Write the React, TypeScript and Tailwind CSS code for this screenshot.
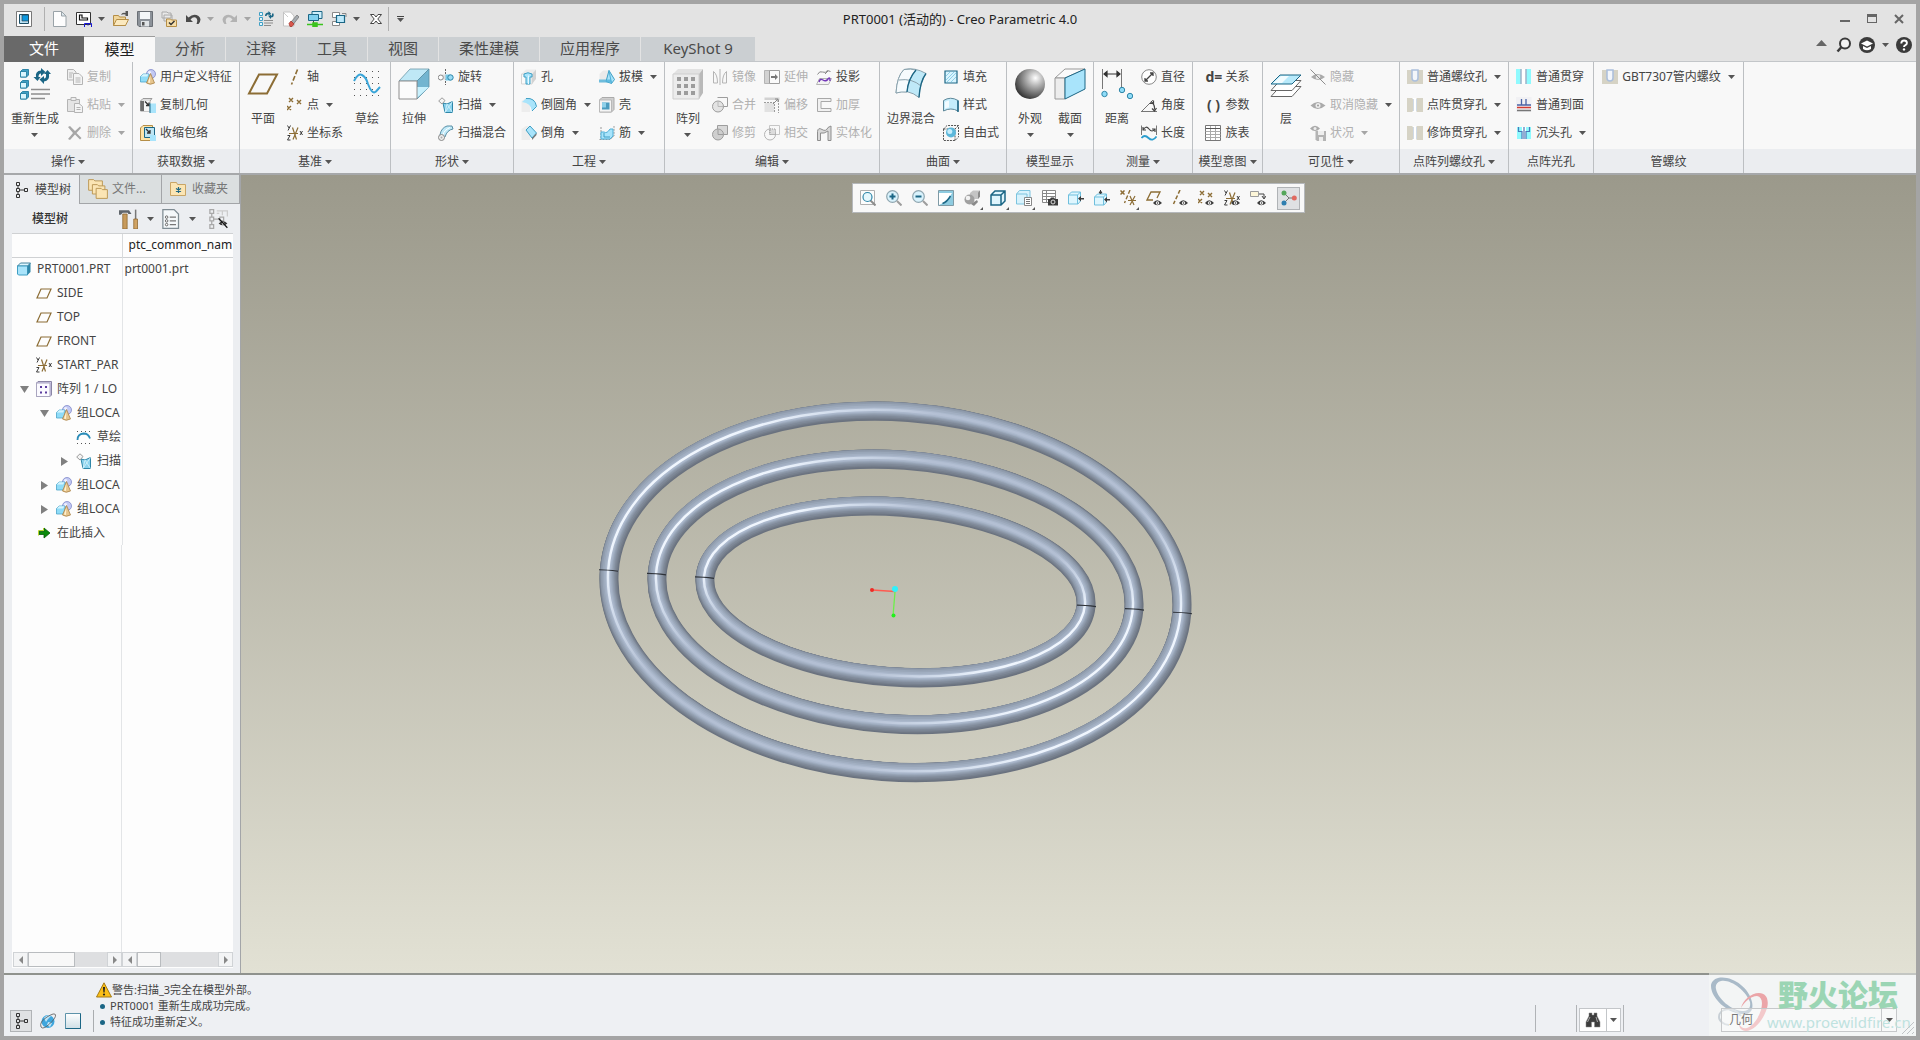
import type { ReactNode } from "react";

const BLUE = "#1b6685";
const SKY = "#a9e4fb";
const MID = "#4fb0d8";
const BROWN = "#8c6d35";
const DIM = "#b4b4b4";

const solids = (
  <>
    <circle cx="11" cy="5" r="4.5" fill="#c3c9f3" stroke="#8089c9" strokeWidth=".8" />
    <circle cx="9.6" cy="3.6" r="1.6" fill="#eef0ff" />
    <path d="M.5 7.5 3 5h6v6l-2 2H.5z" fill="#8fdcf8" stroke="#4ba5c9" strokeWidth=".8" />
    <path d="M.8 7.5 3 5.3h5.5L7 7.5z" fill="#d6f4fe" />
    <path d="M10.5 4.5 6.5 14q3.5 2.5 8 0z" fill="#e6c58d" stroke="#a98246" strokeWidth=".8" />
    <path d="M10.3 6.5 8 13.5l2 .6z" fill="#fff0cf" />
  </>
);

const eye = (
  <>
    <path d="M7 13q4-5.5 9 0-5 4.5-9 0z" fill="#3c3c3c" />
    <circle cx="11.5" cy="13" r="1.7" fill="#fff" />
    <circle cx="11.5" cy="13" r=".8" fill="#333" />
  </>
);

const csys = (c: string) => (
  <>
    <path d="M2 8.500h9M5.500 2.500l4 12M11 2.500l-5 12" stroke={c} strokeWidth="1.200" fill="none" />
    <path d="m.5.5 1.500 2.500M3.500.5 1 5.500M.5 10.500h2.500l-2.500 4.500h3M13 6l2.500 4M15.500 6 13 10" stroke="#3c3c3c" fill="none" />
  </>
);

const crosses = (c: string) => (
  <path d="m2 1 4 4m0-4L2 5m8-2 4 4m0-4-4 4M0 9l4 4m0-4-4 4" stroke={c} strokeWidth="1.4" fill="none" />
);

const sweep = (
  <>
    <path d="m5 6 4 1 5.500-2.500v11H7z" fill="#8bd3ee" stroke="#2f86a8" />
    <path d="m9 7 5.500 8.500M14.500 4.500 7 15.500M9 7l-2 8.500" stroke="#d9f4fd" strokeWidth=".8" fill="none" />
    <path d="M.7 4 4 .8l3 2.700L4 7z" fill="#f5f5f5" stroke="#9b9b9b" />
  </>
);

const treeIcon = (c: string) => (
  <path
    d="M1.500.5h3v3h-3zM1.500 6.500h3v3h-3zM1.500 12.500h3v3h-3zM9.500 6.500h3v3h-3zM3 4v2M3 10v2M5 8h4"
    stroke={c}
    fill="none"
  />
);

const greyHoles = (
  <>
    <path d="M0 1h16v14H0z" fill="#fff" />
    <path d="M0 1h5l1 1v12l-1 1H0zM10 1h6v14h-6l-1-1V2z" fill="#d6d3c5" />
    <path d="M6.500 2v12M9.500 2v12" stroke="#d0dae6" />
  </>
);

const greyU = (
  <>
    <path d="M0 1h16v14H0z" fill="#d6d3c5" />
    <path d="M5 1v8q0 3 3 3t3-3V1z" fill="#f3f6fa" stroke="#abbfdc" strokeWidth="1.500" />
  </>
);

const blockBase = (
  <>
    <path d="M.5 5 5 .5h10L11 5v10H.5z" fill="#ececec" />
    <path d="M.5 5H11v10H.5z" fill="#fafafa" stroke="#d5d5d5" />
    <path d="m11 5 4-4.500V10L11 15z" fill="#d2d2d2" />
  </>
);

const regen = (
  <>
    <g fill="#e5f7fe" stroke="#3f9fc4">
      <path d="M.5 1.500h3v3h-3zM.5 6.500h3v3h-3zM.5 11.500h3v3h-3z" />
    </g>
    <path d="M5 9.500h9M5 12h9M5 14.500h7" stroke="#8b8b8b" />
    <path d="M6 5q0-3.500 3.500-3.500V0L12 2.500 9.500 5V3.200Q7.500 3.200 7.500 5zM14.500 2.500q1 4-2.500 4V8L9.500 5.500 12 3.200v1.600q1.500 0 1-2.300z" fill={BLUE} />
  </>
);

const icons: Record<string, ReactNode> = {
  app: (
    <>
      <path d="M.5.500h15v15H.5z" fill="#fff" stroke="#777" />
      <path d="M3.500 3.500h9v9h-9z" fill="#b9e2f6" stroke="#1d4e66" />
      <path d="M6 4h6.500v6H6z" fill="#0e98df" stroke="#333" strokeWidth=".6" />
    </>
  ),
  fresh: (
    <>
      <path d="M1.500.5h8L14 5v10.500H1.500z" fill="#fdfdfd" stroke="#9aa3a8" />
      <path d="M9.500.5V5H14z" fill="#dde8ed" stroke="#9aa3a8" />
    </>
  ),
  outline: (
    <>
      <path d="M.5 1.500h14v12H.5z" fill="#fff" stroke="#333" />
      <path d="M3.500 4v5h8V7H6V4z" stroke="#111" fill="none" strokeWidth="1.200" />
      <path d="M8.500 16v-3.500h7V16M12 12.500v2" stroke="#1717d8" fill="none" />
    </>
  ),
  open: (
    <>
      <path d="M.5 14.500V4.500h5l1 1.500h6v8.500z" fill="#f1d69b" stroke="#b58e47" />
      <path d="m.5 14.500 3-6h12l-3 6z" fill="#fbe9bf" stroke="#b58e47" />
      <path d="M8 4q1-3 4.500-2V0H15v5h-2.500V3.500Q10 3 8 4z" fill="#555" />
    </>
  ),
  save: (
    <>
      <path d="M.5.500h15v15H2L.5 14z" fill="#8c9299" stroke="#6a6f75" />
      <path d="M3 1h10v7H3z" fill="#f4f7f9" />
      <path d="M4 10h8v5.500H4z" fill="#dfe3e6" />
      <path d="M5 11h2.500v3.500H5z" fill="#555" />
    </>
  ),
  checkin: (
    <>
      <path d="M1 1h5l1 1h3v5H1zM3 4h8v6H3z" fill="#e9e9e9" stroke="#aaa" />
      <path d="M5.500 15.500V8h4l1 1h5v6.500z" fill="#f6deaa" stroke="#b58e47" />
      <path d="m8 11.500 2 2 3.500-3.500" stroke="#333" strokeWidth="1.500" fill="none" />
    </>
  ),
  undo: <path d="M1 4v7h7L5.500 8.500Q8 5.500 10.500 6.500q3 1.500 1 6.500h2q4-5 0-8Q8.500 2 3.500 6.500z" fill="#4a4a4a" />,
  redo: <path d="M15 4v7H8l2.500-2.500Q8 5.500 5.500 6.500q-3 1.500-1 6.500h-2q-4-5 0-8Q7.500 2 12.500 6.500z" fill="#b3b3b3" />,
  regen,
  erase: (
    <>
      <path d="M.5 1h7L11 5v10H.5z" fill="#fff" stroke="#c4c4c4" />
      <path d="m8 11 6-7 2 2-5.500 7z" fill="#a5abb0" stroke="#6f6f6f" strokeWidth=".7" />
      <path d="M6 12.500 8 10l3 3-2 2.500H7z" fill="#d8574d" stroke="#9d2f27" strokeWidth=".7" />
      <path d="m1 2 4 4" stroke="#ccc" />
    </>
  ),
  network: (
    <>
      <path d="M5 .5h10v7H5z" fill="#cdeefb" stroke={BLUE} />
      <path d="M1.500 3.500h10v6h-10z" fill="#7fd0ef" stroke={BLUE} />
      <path d="M6.500 10v2" stroke="#444" />
      <path d="M0 13.500h16M6 12h4v3.500H6z" stroke="#3bc31e" strokeWidth="1.500" fill="#3bc31e" />
    </>
  ),
  windows: (
    <>
      <path d="M1.500 1.500h7v5h-7zM1.500 10.500h7v4h-7z" fill="#fff" stroke="#888" />
      <path d="M11 2.500h4V6" fill="none" stroke="#888" />
      <path d="M5.500 4.500h8v7h-8z" fill="#bce9fb" stroke={BLUE} strokeWidth="1.200" />
    </>
  ),
  closeWin: <path d="M2.500 3.500h3.500L8 6l2-2.500h3.500L9.800 8l3.700 4.500H10L8 10l-2 2.500H2.500L6.200 8z" fill="#fff" stroke="#444" />,
  copy: (
    <>
      <path d="M.5.500h6L9 3v8H.5z" fill="#efefef" stroke={DIM} />
      <path d="M6.500 4.500H12L15.500 8v7.500h-9z" fill="#f4f4f4" stroke={DIM} />
      <path d="M2 4h4M2 6h3M2 8h3M8.500 9h5M8.500 11h5M8.500 13h5" stroke={DIM} />
    </>
  ),
  paste: (
    <>
      <path d="M.5 2.500h12v12H.5z" fill="#e4e4e4" stroke={DIM} />
      <path d="M4 .5h5v3H4z" fill="#eee" stroke={DIM} />
      <path d="M7.500 6.500H12l3.500 3v6h-8z" fill="#f4f4f4" stroke={DIM} />
      <path d="M9.500 10.500h4M9.500 12.500h4" stroke={DIM} />
    </>
  ),
  remove: <path d="M1 2 3 1l5 5 5-4.500L14 3l-4.500 5 5 5-1.500 1.500L8 9.500 3 15l-2-1 5-6z" fill="#a7a7a7" />,
  solids,
  copyGeom: (
    <>
      <path d="M.5 4 3 1.500h9L10 4v10H.5z" fill="#dedede" stroke="#9a9a9a" />
      <path d="M.5 4H4v10H.5z" fill="#6d6d6d" />
      <path d="M4 4h5.500v10H4z" fill="#f6f6f6" />
      <path d="m5 4.500 4 4m0-3v3H6" stroke="#333" strokeWidth="1.300" fill="none" />
      <path d="M10 6.500h6V16h-6z" fill={SKY} />
      <path d="M10 6.500V16" stroke={BLUE} />
    </>
  ),
  shrink: (
    <>
      <path d="M.5 3 3 .5h9.500v13L11 15.500H.5z" fill="#ffe3a7" stroke="#b58e47" />
      <path d="M4.500 2.500h10v10h-10z" fill="#bfe5f3" stroke={BLUE} />
      <path d="m6 4 4 4m0-3v3H7" stroke="#333" strokeWidth="1.300" fill="none" />
      <path d="M10 10h6v6h-6z" fill={SKY} />
    </>
  ),
  axis: <path d="M10.500.5 4.500 15.500" stroke={BROWN} strokeWidth="1.600" strokeDasharray="5 2" />,
  points: crosses(BROWN),
  csys: csys(BROWN),
  revolve: (
    <>
      <path d="M7.500 0v16" stroke="#666" strokeDasharray="2 1" />
      <path d="M4 5.500h4v5H4z" fill="#ddd" />
      <path d="M7.500 5.500h5v6h-5z" fill="#75c9e8" />
      <circle cx="2.800" cy="8.500" r="2.500" fill="#fff" stroke="#888" />
      <circle cx="12.500" cy="8.500" r="2.700" fill="#9adcf5" stroke="#2f86a8" />
    </>
  ),
  sweep,
  blend: (
    <>
      <path d="M2 10Q3 3 9 1h5l1 3q-6 1-8 8l-3 2z" fill="#bfe9f8" stroke="#5a8fa5" />
      <path d="M5 10Q6 5 12 2.500" stroke="#fff" fill="none" />
      <circle cx="3.500" cy="12.500" r="3" fill="#eee" stroke="#888" />
      <circle cx="3.500" cy="12.500" r="1" fill="#aaa" />
    </>
  ),
  hole: (
    <>
      {blockBase}
      <path d="M3 5q4-2.500 8 0v3H9v7H5V8H3z" fill={SKY} stroke="#3f9fc4" />
      <path d="M7.500 6.500V15" stroke="#e8f9ff" />
    </>
  ),
  round: (
    <>
      <path d="M.5 4 5 1h5L9 4v11H.5z" fill="#ededed" />
      <path d="M5 1.500q9-1 10.500 8L11 14Q10 6 1 5z" fill={SKY} />
      <path d="M5 1.500q9-1 10.500 8L11 14" fill="none" stroke="#3f9fc4" />
    </>
  ),
  chamfer: (
    <>
      <path d="M.5 4 5 1h5L9 4v11H.5z" fill="#ededed" />
      <path d="m5 5 4-4 6.500 7-4.500 5z" fill={SKY} stroke="#3f9fc4" />
      <path d="m11 13 4.500-5v2L11 15z" fill="#777" />
    </>
  ),
  draft: (
    <>
      <path d="M.5 5 4 1.500h6v12H.5z" fill="#eaeaea" />
      <path d="m7 12.500 3-11 5.500 9-3 4z" fill={SKY} stroke="#3f9fc4" />
      <path d="m10 1.500 2.500 13" fill="none" stroke={MID} />
      <path d="M0 10.500h12l1 3H0z" fill={MID} opacity=".8" />
    </>
  ),
  shell: (
    <>
      <path d="M.5 3 3 .5h12v12L12.500 15H.5z" fill="#cfcfcf" stroke="#aaa" />
      <path d="M.5 3h12v12H.5z" fill="#f4f4f4" stroke="#b9b9b9" />
      <path d="M3 5.500h7.500v7H3z" fill="#4b9cbf" />
      <path d="M3 5.500h4v5H3z" fill="#8fd1ea" />
    </>
  ),
  rib: (
    <>
      <path d="M2 2v12M.5 14.500H11L15 11V1" stroke="#999" strokeDasharray="2 1" fill="none" />
      <path d="M2 7h3q3 2 6-3h3v7l-3 3H2z" fill={SKY} stroke={MID} />
      <path d="M5 8v4h6" stroke="#3f9fc4" fill="none" />
    </>
  ),
  mirror: <path d="M8 0v16M1.500 2.500q4 3 4 11.500h-4zM14.500 2.500q-4 3-4 11.500h4z" stroke={DIM} fill="none" />,
  merge: (
    <>
      <path d="M5.500.5h10v9h-6" fill="none" stroke="#9d9d9d" />
      <circle cx="6" cy="9.500" r="5.500" fill="#e3e3e3" stroke="#9d9d9d" />
      <path d="M6 4.500v5h5" fill="none" stroke="#b9b9b9" />
    </>
  ),
  trim: (
    <>
      <path d="M5.500.5h10v9h-10z" fill="#d8d8d8" stroke="#9d9d9d" />
      <circle cx="6" cy="9.500" r="5.500" fill="#cfcfcf" stroke="#9d9d9d" />
      <path d="M6 4.500v5h5" fill="none" stroke="#9d9d9d" />
    </>
  ),
  extend: (
    <>
      <path d="M.5 1.500h5v13h-5z" fill="#d2d2d2" stroke={DIM} />
      <path d="M5.500 1.500h10v13h-10z" fill="#fafafa" stroke="#9d9d9d" />
      <path d="M7 7h4V5l3 3-3 3V9H7z" fill="#777" />
    </>
  ),
  offset: (
    <>
      <path d="M.5.500h15V3H.5z" fill="#d2d2d2" />
      <path d="M.5 6H10v9H.5z" fill="#e2e2e2" />
      <path d="M0 5.500h10.500V16M14.500 3v13" stroke="#9d9d9d" strokeDasharray="2 1" fill="none" />
      <path d="m9 7 5-5m-3 0h3v3" stroke="#888" fill="none" />
    </>
  ),
  intersect: (
    <>
      <path d="M5.500.5h10v9h-10z" fill="none" stroke="#c6c6c6" />
      <circle cx="6" cy="9.500" r="5.500" fill="none" stroke={DIM} />
      <path d="M6 4h5.500v5.500H6z" fill="#dcdcdc" stroke="#999" strokeDasharray="1 1" />
    </>
  ),
  project: (
    <>
      <path d="M1.500 5.500q2-4 5-2.500t5-1.500l3 1M9 5l3-3" stroke="#888" fill="none" />
      <path d="m.5 15.500 3-6h12l-3 6z" fill="#f3f3f3" stroke={DIM} />
      <path d="M3 13q1-4 4-2t5-1 2 2" stroke="#7337b8" strokeWidth="1.400" fill="none" />
    </>
  ),
  thicken: <path d="M15 1.500H1.500v13H15v-3H5v-7h10z" fill="#f1f1f1" stroke="#a8a8a8" />,
  solidify: (
    <path d="M1.500 15.500v-9Q2 2 6 4.500t6-2l3-1.500V15.500h-3V6Q8 9 4.500 8v7.500z" fill="#d8d8d8" stroke="#8e8e8e" />
  ),
  fill: (
    <>
      <path d="M2 2h12v12H2z" fill="#d9f4fe" stroke={BLUE} strokeWidth="1.200" />
      <path d="m3 7 4-4M3 11l8-8M4 13l9-9M8 13l5-5" stroke="#8fd0e8" />
    </>
  ),
  style: (
    <>
      <path d="M.5 3.500q7-4.500 14.500 0V14q-7-4-14.500 0z" fill="#c4ecfb" stroke="#5d8799" />
      <path d="M2 5q2-1.500 4-1.500v7q-2 0-4 1.200z" fill="#f1fbff" />
      <path d="M15 3.500V15" stroke={BLUE} strokeWidth="1.500" />
    </>
  ),
  freestyle: (
    <>
      <path d="M.5 4 4 .5h11.500V12L12 15.500H.500zM.5 4H12v11.500M12 4 15.500.5" stroke="#555" fill="none" strokeDasharray="2 1" />
      <circle cx="8" cy="7.500" r="5" fill="#5cb7da" />
      <circle cx="6.800" cy="6.500" r="2.500" fill="#c6edfb" />
    </>
  ),
  diameter: (
    <>
      <circle cx="8" cy="8" r="7.300" fill="#fff" stroke="#888" />
      <path d="m4 12 8-8M4 9v3h3M12 7V4H9" stroke="#444" strokeWidth="1.300" fill="none" />
    </>
  ),
  angle: (
    <>
      <path d="M0 14.500h16M1 14 12 3" stroke="#777" fill="none" />
      <path d="M10 4.500q4 3 3.500 8M8.500 6.500h4v-3M11 11.500l2.500 2.500 2-3" stroke="#444" strokeWidth="1.200" fill="none" />
    </>
  ),
  length: (
    <>
      <path d="M.5.500V10M15.500.5V10" stroke="#777" />
      <path d="M2 5q3-5 6-1t6 0M2 2v3h3M14 7V4h-3" stroke="#444" strokeWidth="1.200" fill="none" />
      <path d="M.5 13q3-4 7 0t8-1.500" stroke="#2b9dce" strokeWidth="1.800" fill="none" />
    </>
  ),
  table: (
    <>
      <path d="M.5.500h15v15H.5z" fill="#fff" stroke="#777" />
      <path d="M.5 3.500h15M.5 6.500h15M.5 9.500h15M.5 12.500h15M5.500 1v14M10.500 1v14" stroke="#aaa" fill="none" />
      <path d="M.5 3.500h15" stroke="#555" />
    </>
  ),
  hide: (
    <>
      <path d="M1 8q6.500-6 14 0-7 6-14 0z" fill="#aaa" />
      <circle cx="8" cy="8" r="2.300" fill="#e8e8e8" />
      <path d="m.5.500 15 15" stroke="#8e8e8e" />
    </>
  ),
  unhide: (
    <>
      <path d="M.500 8.500q7-7 15 0-8 7-15 0z" fill="#aaa" />
      <circle cx="8" cy="8.500" r="2.500" fill="#eee" />
      <circle cx="8" cy="8.500" r="1" fill="#999" />
    </>
  ),
  status: (
    <>
      <path d="M0 3.500q5-5.500 10 0-5 5-10 0z" fill="#aaa" />
      <circle cx="5" cy="3.500" r="1.500" fill="#eee" />
      <path d="M5.500 6H16v10H7l-1.500-1.500z" fill="#b4b4b4" />
      <path d="M8 6h6v4H8zM9 12h4v4H9z" fill="#eee" />
    </>
  ),
  greyU,
  greyHoles,
  cyanHoles: (
    <>
      <path d="M0 0h15v15H0z" fill="#8ffafe" />
      <path d="M5 0h5v15H5z" fill="#fff" />
      <path d="M5 0v15M10 0v15" stroke="#9fb3c8" strokeWidth="1.500" />
    </>
  ),
  toFace: (
    <>
      <path d="M0 0h15.500v15H0z" fill="#f1f1f4" />
      <path d="M1 8h14M5.500 2v6M10 2v6" stroke="#4a63a5" strokeWidth="1.300" />
      <path d="M1 10.500h14" stroke="#d33b31" strokeWidth="1.500" />
      <path d="M1 13.500h14" stroke="#777" strokeWidth="1.500" />
    </>
  ),
  sink: (
    <>
      <path d="M1 2h14v12H1z" fill="#8ffafe" />
      <path d="M6 2h4v12H6z" fill="#fff" />
      <path d="M2.500 2v4.500H6V14M13.500 2v4.500H10V14M8 2v12" stroke="#4a78b8" strokeWidth="1.200" fill="none" />
    </>
  ),
  tree: treeIcon("#333"),
  folders: (
    <g fill="#fbe5b4" stroke="#bd9a58" strokeWidth=".8">
      <path d="M.5 9V.5h4l1 1h6V9z" />
      <path d="M3.500 12V4.500h4l1 1h5V12z" />
      <path d="M6.500 15.500v-8h4l1 1h4v7z" />
    </g>
  ),
  favourite: (
    <>
      <path d="M.5 14.500v-13h6l1 2h8v11z" fill="#fbe5b4" stroke="#c9a566" />
      <path d="M8.500 6v6M6 7.500l5 3M6 10.500l5-3" stroke={BLUE} strokeWidth="1.200" />
    </>
  ),
  filterTree: (
    <>
      {treeIcon("#a8a8a8")}
      <path d="M7 1.500h9M7 3.500h2M11.500 2v3M15.500 2v4" stroke="#ccc" fill="none" />
      <path d="M8.500 11.500q3.500-3.500 7 0-3.500 3-7 0z" fill="#333" />
      <circle cx="12" cy="11.500" r="1" fill="#fff" />
      <path d="m8.500 7.500 7 7.500" stroke="#111" />
    </>
  ),
  tools: (
    <>
      <path d="M0 1h8l2 3H7.500L7 3H3L1.500 4.500H0z" fill="#5f656b" />
      <path d="M3 4h3.500v12H3z" fill="#c79a5b" stroke="#8b642e" strokeWidth=".6" />
      <path d="M12.700.5h1.200V8h-1.200z" fill="#777" />
      <path d="M11.800 8h3v8h-3z" fill="#d0a364" stroke="#8b642e" strokeWidth=".6" />
    </>
  ),
  settings: (
    <>
      <path d="M1.500.5h9L14 4v11.500H1.500z" fill="#f4f8fa" stroke="#7f8c93" />
      <path d="M7 6.500h5M7 9.500h5M7 12.500h5" stroke="#777" />
      <g fill="#fff" stroke="#666" strokeWidth=".8">
        <circle cx="4.500" cy="6.500" r="1" />
        <circle cx="4.500" cy="9.500" r="1" />
        <circle cx="4.500" cy="12.500" r="1" />
      </g>
    </>
  ),
  part: (
    <>
      <path d="m1.500 5 3-3h10l-3 3z" fill="#dff6fe" stroke={BLUE} strokeWidth=".8" />
      <path d="M1.500 5h10v9h-9l-1-1z" fill={SKY} stroke="#3f9fc4" />
      <path d="m11.500 5 3-3v9l-3 3z" fill="#2f86a8" />
    </>
  ),
  plane: <path d="M5 4h10l-4 9H1z" fill="none" stroke={BROWN} strokeWidth="1.200" />,
  pattern: (
    <>
      <path d="M.5 2 2 .5h13.500V14L14 15.500H.5z" fill="#cfc9ea" stroke="#8b86a5" />
      <path d="M.5 2H14v13.500H.5z" fill="#fbfaff" stroke="#a9a5bf" />
      <path d="M4 5h2v2H4zM9 5h2v2H9zM4 10.500h2v2H4zM9 10.500h2v2H9z" fill="#5b3d9e" />
    </>
  ),
  sketchSmall: (
    <>
      <path d="M1 2.500h15M1 14.500h15" stroke="#555" strokeDasharray="1 3" />
      <path d="M1.500 11q0-6 6-6.500 5 0 6.500 5" fill="none" stroke="#2b8cb8" strokeWidth="1.800" />
    </>
  ),
  insert: (
    <>
      <path d="M3 6.500h5V3l6 5-6 5V9.500H3z" fill="#0a8a0a" stroke="#0a5a0a" strokeWidth=".8" />
      <path d="M2.500 10.500v-5h5V3" stroke="#b9d531" fill="none" />
    </>
  ),
  refit: (
    <>
      <path d="M.5.5h14v14H.5z" fill="#fdfdfd" stroke="#b0b0b0" />
      <path d="m10 10 5.500 5.500" stroke="#8d8d8d" strokeWidth="2" />
      <circle cx="7.500" cy="7" r="4.500" fill="#e6f7fd" stroke="#2f86a8" strokeWidth="1.200" />
    </>
  ),
  zoomIn: (
    <>
      <circle cx="6.500" cy="6.500" r="5.800" fill="#d9f2fc" stroke="#8fa6b0" strokeWidth="1.200" />
      <path d="M3.500 6.500h6M6.500 3.500v6" stroke={BLUE} strokeWidth="2" />
      <path d="m11 11 4.500 4.500" stroke="#9d9d9d" strokeWidth="2" />
    </>
  ),
  zoomOut: (
    <>
      <circle cx="6.500" cy="6.500" r="5.800" fill="#d9f2fc" stroke="#8fa6b0" strokeWidth="1.200" />
      <path d="M3.500 6.500h6" stroke={BLUE} strokeWidth="2" />
      <path d="m11 11 4.500 4.500" stroke="#9d9d9d" strokeWidth="2" />
    </>
  ),
  repaint: (
    <>
      <path d="M.5.500h15v15H.5z" fill="#8ecbe0" stroke="#7f9aa5" />
      <path d="M1 3h13q-4 7-9 10l-4 2z" fill="#fff" />
      <path d="M4.500 13.500Q9 12 12.500 6" stroke={BLUE} strokeWidth="1.500" fill="none" />
    </>
  ),
  shading: (
    <>
      <path d="M6 3 9 .5h7v6L14 9H6z" fill="#c4c4c4" />
      <path d="m14 2.500 2-2v6L14 9z" fill="#8a8a8a" />
      <circle cx="5.500" cy="9.500" r="5" fill="#a0a0a0" />
      <circle cx="4" cy="8" r="2.300" fill="#f2f2f2" />
      <path d="m7 14 6-4 1 2-4 4z" fill="#8a8a8a" />
    </>
  ),
  cube: <path d="M1 5 5 1h10v10l-4 4H1zM1 5h10v10M11 5l4-4" fill="#dff5fd" stroke={BLUE} strokeWidth="1.500" />,
  savedView: (
    <>
      <path d="m.5 4 3-3.500h10.500V12l-2 2H.5z" fill="#d8f2fc" stroke="#7cc4df" />
      <path d="M.5 4H11v4" fill="none" stroke="#7cc4df" />
      <path d="M8.500 7.500h7v8h-7z" fill="#fff" stroke="#888" />
      <path d="M10 9.500h4M10 11.500h4M10 13.500h4" stroke="#777" />
    </>
  ),
  viewManager: (
    <>
      <path d="M.5.500h13v12H.5z" fill="#fff" stroke="#888" />
      <path d="M.5 3.500h13M.5 6.500h13M.5 9.500h13M4.500.5v12" stroke="#888" />
      <path d="M6 9h2l1-1.500h3L13 9h3v6.500H6z" fill="#3b3b3b" />
      <circle cx="11" cy="12" r="2" fill="#3b3b3b" stroke="#ddd" />
    </>
  ),
  explode: (
    <>
      <path d="m.5 5 3-3h9v9l-2.500 3H.5z" fill="#dff6fe" stroke="#6fbfdd" />
      <path d="M.500 5h9v9M9.500 5l3-3" fill="none" stroke="#6fbfdd" />
      <path d="M10 8.500 13 6v2h3v1.500h-3v2z" fill="#3c3c3c" />
    </>
  ),
  explodeUp: (
    <>
      <path d="m.5 7 3-3h9v8l-2.500 3H.5z" fill="#dff6fe" stroke="#6fbfdd" />
      <path d="M.500 7h9v8M9.500 7l3-3" fill="none" stroke="#6fbfdd" />
      <path d="M6.500 0v3M5 2l1.500 2L8 2z" stroke="#3c3c3c" fill="#3c3c3c" />
      <path d="M10 9.500 13 7v2h3v1.500h-3v2z" fill="#3c3c3c" />
    </>
  ),
  datumFilter: (
    <>
      <path d="m.5.500 4 4m0-4-4 4" stroke={BROWN} strokeWidth="1.500" />
      <path d="M10 0 4.500 13" stroke={BROWN} strokeWidth="1.400" strokeDasharray="4 2" />
      <path d="M8 10.500h8M10 6l4 9M15 6l-5 9" stroke={BROWN} strokeWidth="1.200" />
    </>
  ),
  planeEye: (
    <>
      <path d="M7 10H1l4-8h9l-3 6" fill="none" stroke={BROWN} strokeWidth="1.300" />
      {eye}
    </>
  ),
  axisEye: (
    <>
      <path d="M8 0 1.500 14" stroke={BROWN} strokeWidth="1.500" strokeDasharray="4 2" />
      {eye}
    </>
  ),
  pointEye: (
    <>
      {crosses(BROWN)}
      {eye}
    </>
  ),
  csysEye: (
    <>
      {csys(BROWN)}
      {eye}
    </>
  ),
  noteEye: (
    <>
      <path d="M.5 1.500h8v5h-8z" fill="#fdf6d8" stroke="#9c9c9c" />
      <path d="M9 4h5v4m-2-2 2 3 2-3" stroke="#444" fill="none" />
      {eye}
    </>
  ),
  spin: (
    <>
      <path d="M3 3 8 8h5M8 8l-5 5" stroke="#777" fill="none" />
      <circle cx="3" cy="3" r="2.500" fill="#55a65a" />
      <circle cx="13.300" cy="8" r="2.500" fill="#e06a60" />
      <circle cx="3" cy="13" r="2.500" fill="#2f7fb0" />
    </>
  ),
  globe: (
    <>
      <circle cx="8" cy="8.500" r="6.500" fill="#3fa6dd" />
      <path d="M4 5q3-4 7-2l-3 3-2 3zM8 9l4 1-2 4-3-2z" fill="#bfe7fa" />
      <path d="M1 14Q-1 9 7 4t8.500-2-6 9T1 14z" fill="none" stroke="#555" strokeWidth=".8" />
    </>
  ),
  blank: (
    <>
      <defs>
        <linearGradient id="sheet" x1="0" y1="0" x2="0" y2="1">
          <stop offset="0" stopColor="#fff" />
          <stop offset="1" stopColor="#cfdfe6" />
        </linearGradient>
      </defs>
      <path d="M.5.500h15v15H.5z" fill="url(#sheet)" stroke="#5d93aa" />
      <path d="M15.500.5v15H.5" fill="none" stroke={BLUE} />
    </>
  ),
  warning: (
    <>
      <path d="M8 .8 15.500 15H.5z" fill="#fbbf17" stroke="#a47b16" strokeLinejoin="round" />
      <path d="M7 5h2l-.4 5.500H7.400z" fill="#222" />
      <circle cx="8" cy="12.500" r="1.100" fill="#222" />
    </>
  ),
  find: (
    <>
      <path d="M4 1h3v2h2V1h3v3l3 6v5H9.500v-5h-3v5H1v-5l3-6z" fill="#3d3d3d" stroke="#888" strokeWidth=".5" />
      <path d="M2.500 10 5 5M11 5l1.500 5" stroke="#aaa" />
    </>
  ),
  search: (
    <>
      <circle cx="9" cy="6.500" r="5" fill="#f3f3f3" stroke="#3b3b3b" strokeWidth="2" />
      <path d="m5.500 10-4 4.500" stroke="#3b3b3b" strokeWidth="2.500" />
    </>
  ),
  learn: (
    <>
      <circle cx="8" cy="8" r="8" fill="#3b3b3b" />
      <path d="m2 6.500 6-3 6 3-6 3z" fill="#fff" />
      <path d="M4 9v3q4 2.500 8 0V9l-4 2z" fill="#fff" />
    </>
  ),
  help: (
    <>
      <circle cx="8" cy="8" r="8" fill="#3b3b3b" />
      <path d="M5.300 6.500q0-3 2.800-3t2.800 2.500q0 1.500-1.500 2.200T8 10" stroke="#fff" strokeWidth="1.900" fill="none" />
      <circle cx="8" cy="12.400" r="1.200" fill="#fff" />
    </>
  ),
};

// 32px drawings for the tall ribbon buttons
const bigIcons: Record<string, ReactNode> = {
  regen: (
    <>
      <g stroke="#2f86a8">
        {[1, 12, 23].map((y) => (
          <g key={y} transform={`translate(1 ${y})`}>
            <path d="M.5 2.500 2.500.5h6v5.500l-2 2h-6z" fill="#3f9fc4" />
            <path d="M.5 2.500h6V8h-6z" fill="#d9f5fe" />
          </g>
        ))}
      </g>
      <path d="M12 21.500h19M12 26h19M12 30.500h14" stroke="#8d8d8d" strokeWidth="1.500" />
      <path d="M17 9q-1-6 5-6.500V0l4.500 4-4.500 4V5.500q-2.500 0-2.500 3.500h2L18.500 13 14.500 9zM30 6q1 7-5 7.500V16l-4.500-4.500L25 8v2.500q2.500 0 2-4.500h-2L28.500 2 32 6z" fill={BLUE} />
    </>
  ),
  plane: <path d="M12 6.500h18L20 25.500H2z" fill="#f8f8f8" stroke={BROWN} strokeWidth="2" />,
  sketch: (
    <>
      <g fill="#555">
        {[3, 9, 15, 21, 27].map((y) => [3, 9, 15, 21, 27].map((x) => <path key={`${x}-${y}`} d={`M${x} ${y}h1v1h-1z`} />))}
      </g>
      <path d="M3 13Q7 5 11 7q4 2 6 9 4 11 8 7.500l4-4.500" fill="none" stroke="#3aa5d8" strokeWidth="2" />
    </>
  ),
  extrude: (
    <>
      <path d="M1 13 12 1h19L19 13z" fill="#bfe8f6" stroke="#6b98a8" strokeWidth=".8" />
      <path d="m19 13 12-12v18L19 31z" fill="#73b5d0" stroke="#5b8fa3" strokeWidth=".8" />
      <path d="m19 30 12-11H19z" fill="#c9f1fd" />
      <path d="M1 13h18v18H1z" fill="#fbfbfb" stroke="#8e8e8e" />
    </>
  ),
  pattern: (
    <>
      <path d="m1 6 5-5h25l-4 5z" fill="#e2e2e2" />
      <path d="m27 6 4-5v24l-4 6z" fill="#b9b9b9" />
      <path d="M1 6h26v25H1z" fill="#ececec" stroke="#cfcfcf" />
      <g fill="#9c9c9c">
        {[9, 16, 23].map((y) => [5, 12, 19].map((x) => <path key={`${x}-${y}`} d={`M${x} ${y}h4v4h-4z`} />))}
      </g>
    </>
  ),
  boundary: (
    <>
      <path d="M1 25Q2 8 9 1.500q11-2.500 22 4-6 8-7 24-11-9-23-4.500z" fill="#bfe9f8" stroke="#8aa2ad" />
      <path d="M1 25Q2 8 9 1.500q7-1 12 .5-8 9-9 22-6-.5-11 1z" fill="#f6fbfd" stroke="#8aa2ad" />
      <path d="M4 12q13-2 22 6" stroke="#8aa2ad" fill="none" />
      <path d="M21 2q-8 9-9 22M31 5.500q-6 8-7 24" stroke={BLUE} fill="none" strokeWidth="1.300" />
    </>
  ),
  sphere: (
    <>
      <defs>
        <radialGradient id="ball" cx=".68" cy=".3" r=".75">
          <stop offset="0" stopColor="#fff" />
          <stop offset=".35" stopColor="#b5b5b5" />
          <stop offset="1" stopColor="#353535" />
        </radialGradient>
      </defs>
      <circle cx="16" cy="16" r="15" fill="url(#ball)" />
    </>
  ),
  section: (
    <>
      <path d="M1 10 11 1h20L11 10z" fill="#fbfbfb" stroke="#999" />
      <path d="M1 10h10v21H1z" fill="#ededed" stroke="#999" />
      <path d="m11 10 20-9v20L11 31z" fill={SKY} stroke={BLUE} />
    </>
  ),
  distance: (
    <>
      <path d="M1.500 1v20M20.500 1v18" stroke="#777" />
      <path d="M3 6h16M6 3.500 3 6l3 2.500zM16 3.500 19 6l-3 2.500z" fill="#333" stroke="#333" strokeWidth="1.200" />
      <g fill="#8fdcf8" stroke="#2f86a8">
        <circle cx="3.500" cy="26" r="2.700" />
        <circle cx="21" cy="22" r="2.700" />
        <circle cx="29" cy="28" r="2.700" />
      </g>
    </>
  ),
  layer: (
    <>
      <path d="M10 18.500h21l-9 10H1z" fill="#fff" stroke="#666" />
      <path d="M10 12.500h21l-9 10H1z" fill="#fff" stroke="#666" />
      <path d="M10 7h21l-9 9H1z" fill="#b8eafb" stroke={BLUE} />
      <path d="M11 8h8l-7 7H3z" fill="#f2fcff" />
    </>
  ),
};

function Icon({ name, size = 16 }: { name: string; size?: number }) {
  return (
    <svg width={size} height={size} viewBox="0 0 16 16" className="shrink-0" aria-hidden="true">
      {icons[name]}
    </svg>
  );
}

function Caret({ dim = false }: { dim?: boolean }) {
  return (
    <svg width={7} height={4} viewBox="0 0 7 4" className="shrink-0" aria-hidden="true">
      <path d="M0 0h7L3.500 4z" fill={dim ? "#a5a5a5" : "#555"} />
    </svg>
  );
}

type Tool = { icon?: string; glyph?: string; text: string; caret?: boolean; off?: boolean; offCaret?: boolean };
type Big = { big: string; text: string; caret?: boolean };
type Group = { label: string; caret?: boolean; width: string; parts: (Big | Tool[])[] };

const groups: Group[] = [
  {
    label: "操作",
    caret: true,
    width: "w-[129px]",
    parts: [
      { big: "regen", text: "重新生成", caret: true },
      [
        { icon: "copy", text: "复制", off: true },
        { icon: "paste", text: "粘贴", caret: true, off: true },
        { icon: "remove", text: "删除", caret: true, off: true },
      ],
    ],
  },
  {
    label: "获取数据",
    caret: true,
    width: "w-[107px]",
    parts: [
      [
        { icon: "solids", text: "用户定义特征" },
        { icon: "copyGeom", text: "复制几何" },
        { icon: "shrink", text: "收缩包络" },
      ],
    ],
  },
  {
    label: "基准",
    caret: true,
    width: "w-[151px]",
    parts: [
      { big: "plane", text: "平面" },
      [
        { icon: "axis", text: "轴" },
        { icon: "points", text: "点", caret: true },
        { icon: "csys", text: "坐标系" },
      ],
      { big: "sketch", text: "草绘" },
    ],
  },
  {
    label: "形状",
    caret: true,
    width: "w-[123px]",
    parts: [
      { big: "extrude", text: "拉伸" },
      [
        { icon: "revolve", text: "旋转" },
        { icon: "sweep", text: "扫描", caret: true },
        { icon: "blend", text: "扫描混合" },
      ],
    ],
  },
  {
    label: "工程",
    caret: true,
    width: "w-[151px]",
    parts: [
      [
        { icon: "hole", text: "孔" },
        { icon: "round", text: "倒圆角", caret: true },
        { icon: "chamfer", text: "倒角", caret: true },
      ],
      [
        { icon: "draft", text: "拔模", caret: true },
        { icon: "shell", text: "壳" },
        { icon: "rib", text: "筋", caret: true },
      ],
    ],
  },
  {
    label: "编辑",
    caret: true,
    width: "w-[215px]",
    parts: [
      { big: "pattern", text: "阵列", caret: true },
      [
        { icon: "mirror", text: "镜像", off: true },
        { icon: "merge", text: "合并", off: true },
        { icon: "trim", text: "修剪", off: true },
      ],
      [
        { icon: "extend", text: "延伸", off: true },
        { icon: "offset", text: "偏移", off: true },
        { icon: "intersect", text: "相交", off: true },
      ],
      [
        { icon: "project", text: "投影" },
        { icon: "thicken", text: "加厚", off: true },
        { icon: "solidify", text: "实体化", off: true },
      ],
    ],
  },
  {
    label: "曲面",
    caret: true,
    width: "w-[127px]",
    parts: [
      { big: "boundary", text: "边界混合" },
      [
        { icon: "fill", text: "填充" },
        { icon: "style", text: "样式" },
        { icon: "freestyle", text: "自由式" },
      ],
    ],
  },
  {
    label: "模型显示",
    width: "w-[87px]",
    parts: [
      { big: "sphere", text: "外观", caret: true },
      { big: "section", text: "截面", caret: true },
    ],
  },
  {
    label: "测量",
    caret: true,
    width: "w-[99px]",
    parts: [
      { big: "distance", text: "距离" },
      [
        { icon: "diameter", text: "直径" },
        { icon: "angle", text: "角度" },
        { icon: "length", text: "长度" },
      ],
    ],
  },
  {
    label: "模型意图",
    caret: true,
    width: "w-[70px]",
    parts: [
      [
        { glyph: "d=", text: "关系" },
        { glyph: "( )", text: "参数" },
        { icon: "table", text: "族表" },
      ],
    ],
  },
  {
    label: "可见性",
    caret: true,
    width: "w-[137px]",
    parts: [
      { big: "layer", text: "层" },
      [
        { icon: "hide", text: "隐藏", off: true },
        { icon: "unhide", text: "取消隐藏", caret: true, off: true, offCaret: false },
        { icon: "status", text: "状况", caret: true, off: true },
      ],
    ],
  },
  {
    label: "点阵列螺纹孔",
    caret: true,
    width: "w-[109px]",
    parts: [
      [
        { icon: "greyU", text: "普通螺纹孔", caret: true },
        { icon: "greyHoles", text: "点阵贯穿孔", caret: true },
        { icon: "greyHoles", text: "修饰贯穿孔", caret: true },
      ],
    ],
  },
  {
    label: "点阵光孔",
    width: "w-[85px]",
    parts: [
      [
        { icon: "cyanHoles", text: "普通贯穿" },
        { icon: "toFace", text: "普通到面" },
        { icon: "sink", text: "沉头孔", caret: true },
      ],
    ],
  },
  {
    label: "管螺纹",
    width: "w-[150px]",
    parts: [[{ icon: "greyU", text: "GBT7307管内螺纹", caret: true }]],
  },
];

const quick: { icon: string; caret?: boolean; dim?: boolean }[] = [
  { icon: "fresh" },
  { icon: "outline", caret: true },
  { icon: "open" },
  { icon: "save" },
  { icon: "checkin" },
  { icon: "undo", caret: true, dim: true },
  { icon: "redo", caret: true, dim: true },
  { icon: "regen" },
  { icon: "erase" },
  { icon: "network" },
  { icon: "windows", caret: true },
  { icon: "closeWin" },
];

const tabs = [
  { text: "分析", width: "w-[70px]" },
  { text: "注释", width: "w-[70px]" },
  { text: "工具", width: "w-[70px]" },
  { text: "视图", width: "w-[70px]" },
  { text: "柔性建模", width: "w-[100px]" },
  { text: "应用程序", width: "w-[100px]" },
  { text: "KeyShot 9", width: "w-[114px]" },
];

const viewTools = [
  "refit", "zoomIn", "zoomOut", "repaint", "shading", "cube", "savedView", "viewManager", "explode",
  "explodeUp", "datumFilter", "planeEye", "axisEye", "pointEye", "csysEye", "noteEye",
];
const withCorner = ["shading", "cube", "savedView", "datumFilter"];

const rows: { pad: string; icon: string; text: string; fold?: "open" | "shut"; value?: string }[] = [
  { pad: "pl-1", icon: "part", text: "PRT0001.PRT", value: "prt0001.prt" },
  { pad: "pl-6", icon: "plane", text: "SIDE" },
  { pad: "pl-6", icon: "plane", text: "TOP" },
  { pad: "pl-6", icon: "plane", text: "FRONT" },
  { pad: "pl-6", icon: "csys", text: "START_PAR" },
  { pad: "pl-2", icon: "pattern", text: "阵列 1 / LO", fold: "open" },
  { pad: "pl-7", icon: "solids", text: "组LOCA", fold: "open" },
  { pad: "pl-16", icon: "sketchSmall", text: "草绘" },
  { pad: "pl-12", icon: "sweep", text: "扫描", fold: "shut" },
  { pad: "pl-7", icon: "solids", text: "组LOCA", fold: "shut" },
  { pad: "pl-7", icon: "solids", text: "组LOCA", fold: "shut" },
  { pad: "pl-6", icon: "insert", text: "在此插入" },
];

function BigButton({ big, text, caret }: Big) {
  return (
    <button className="flex min-w-8 flex-col items-center pt-[5px]">
      <svg width={32} height={32} viewBox="0 0 32 32" aria-hidden="true">
        {bigIcons[big]}
      </svg>
      <span className="mt-[11px] leading-4">{text}</span>
      {caret && (
        <span className="mt-1.5">
          <Caret />
        </span>
      )}
    </button>
  );
}

function ToolButton({ icon, glyph, text, caret, off, offCaret = true }: Tool) {
  return (
    <button disabled={off} className="flex h-7 items-center gap-1 whitespace-nowrap disabled:text-[#b0b0b0]">
      {icon ? <Icon name={icon} /> : <b className="w-4 text-center text-sm leading-4">{glyph}</b>}
      <span className="leading-4">{text}</span>
      {caret && (
        <span className="ml-[3px]">
          <Caret dim={off && offCaret} />
        </span>
      )}
    </button>
  );
}

function RibbonGroup({ group }: { group: Group }) {
  return (
    <section className={`flex shrink-0 flex-col border-r border-[#bcbfc2] ${group.width}`}>
      <div className="flex h-[87px] justify-center gap-2 pt-px">
        {group.parts.map((part, i) =>
          Array.isArray(part) ? (
            <div key={i} className="flex flex-col items-start">
              {part.map((tool) => (
                <ToolButton key={tool.text} {...tool} />
              ))}
            </div>
          ) : (
            <BigButton key={i} {...part} />
          )
        )}
      </div>
      <button className="flex h-6 items-center justify-center gap-[3px] whitespace-nowrap bg-[#ebedf0] pt-px">
        {group.label}
        {group.caret && <Caret />}
      </button>
    </section>
  );
}

function Header() {
  return (
    <header className="bg-[#e3e3e3]">
      <div className="flex h-8 items-center pb-[3px]">
        <div className="flex h-full flex-1 items-center pl-3">
          <Icon name="app" />
          <div className="ml-3 mr-[7px] h-6 w-px bg-[#b0b0b0]"></div>
          <div className="flex items-center gap-2">
            {quick.map((q) => (
              <button key={q.icon} aria-label={q.icon} className="flex items-center gap-1.5">
                <Icon name={q.icon} />
                {q.caret && <Caret dim={q.dim} />}
              </button>
            ))}
          </div>
          <div className="ml-1 mr-2 h-6 w-px bg-[#b0b0b0]"></div>
          <button aria-label="customize" className="flex flex-col items-center gap-px">
            <span className="h-px w-[7px] bg-[#444]"></span>
            <Caret />
          </button>
        </div>
        <h1 className="text-[13px] leading-4 text-[#222]">PRT0001 (活动的) - Creo Parametric 4.0</h1>
        <div className="flex flex-1 items-center justify-end gap-[17px] pr-3">
          <button aria-label="minimize" className="flex h-[7px] w-[10px] items-end">
            <span className="h-0.5 w-full bg-[#666]"></span>
          </button>
          <button aria-label="maximize" className="h-[9px] w-[10px] border border-t-[3px] border-[#666]"></button>
          <button aria-label="close">
            <svg width={10} height={10} viewBox="0 0 10 10">
              <path d="m1 1 8 8M9 1 1 9" stroke="#666" strokeWidth="2" />
            </svg>
          </button>
        </div>
      </div>
      <div className="flex h-[26px] border-b border-[#c3c6c9]">
        <nav className="flex gap-px text-[15px] leading-5 text-[#4a4a4a]">
          <button className="-mb-px h-[26px] w-20 bg-[#696969] pb-0.5 text-white">文件</button>
          <button className="-mb-px -ml-px h-[26px] w-[71px] border-t border-[#9c9c9c] bg-[#f8f8f8] pb-0.5 text-[#222]">模型</button>
          {tabs.map((t, i) => (
            <button key={t.text} className={`mt-px h-6 bg-[#cbcfd2] pb-0.5 ${t.width} ${i === 0 ? "-ml-px" : ""}`}>
              {t.text}
            </button>
          ))}
        </nav>
        <div className="ml-auto flex items-center gap-[7px] pb-2 pr-1">
          <button aria-label="collapse" className="mr-0.5 pb-1">
            <svg width={11} height={6} viewBox="0 0 11 6">
              <path d="M0 6 5.500 0 11 6z" fill="#666" />
            </svg>
          </button>
          <button aria-label="search">
            <Icon name="search" />
          </button>
          <button aria-label="learn" className="flex items-center gap-[7px]">
            <Icon name="learn" />
            <Caret />
          </button>
          <button aria-label="help">
            <Icon name="help" />
          </button>
        </div>
      </div>
    </header>
  );
}

function ScrollBar({ thumb }: { thumb: string }) {
  return (
    <div className="flex h-[15px] flex-1 bg-[#dedfe1]">
      <button aria-label="scroll left" className="flex w-[15px] items-center justify-center border border-[#d0d3d6] bg-[#f3f4f5]">
        <svg width={4} height={8} viewBox="0 0 4 8">
          <path d="M4 0v8L0 4z" fill="#888" />
        </svg>
      </button>
      <div className={`border border-[#b9bcbf] bg-[#f8f8f8] ${thumb}`}></div>
      <button aria-label="scroll right" className="ml-auto flex w-[15px] items-center justify-center border border-[#d0d3d6] bg-[#f3f4f5]">
        <svg width={4} height={8} viewBox="0 0 4 8">
          <path d="M0 0v8l4-4z" fill="#888" />
        </svg>
      </button>
    </div>
  );
}

function ModelTree() {
  return (
    <aside className="flex w-[237px] shrink-0 flex-col border-r border-[#a3a5a8] bg-[#eceef1]">
      <div className="flex h-[29px]">
        <button className="flex w-[75px] items-center gap-1 pl-[11px]">
          <Icon name="tree" />
          模型树
        </button>
        <button className="flex w-[82px] items-center gap-1 border-b border-l border-[#a3a5a8] bg-[#dbdfe0] pl-2 text-[#777]">
          <Icon name="folders" size={20} />
          文件...
        </button>
        <button className="flex flex-1 items-center gap-1.5 border-x border-b border-[#a3a5a8] bg-[#dbdfe0] pl-2 text-[#777]">
          <Icon name="favourite" />
          收藏夹
        </button>
      </div>
      <div className="flex h-[29px] items-center pl-7">
        <h2 className="font-medium text-[#333]">模型树</h2>
        <button aria-label="tools" className="ml-[51px] flex items-center gap-2">
          <Icon name="tools" size={20} />
          <Caret />
        </button>
        <button aria-label="settings" className="ml-[7px] flex items-center gap-2">
          <Icon name="settings" size={20} />
          <Caret />
        </button>
        <button aria-label="filter" className="ml-3">
          <Icon name="filterTree" size={20} />
        </button>
      </div>
      <div className="ml-2 mr-[7px] flex min-h-0 flex-1 flex-col border-t border-[#cfd1d3] bg-[#fdfdfd]">
        <table className="w-full table-fixed">
          <thead>
            <tr className="h-[23px] border-b border-[#cfd1d3]">
              <th className="w-[110px] border-r border-[#d8dadc]"></th>
              <th className="whitespace-nowrap pl-1.5 text-left font-normal text-[#222]">ptc_common_nam</th>
            </tr>
          </thead>
          <tbody>
            {rows.map((r, i) => (
              <tr key={i} className="h-6">
                <td className="border-r border-[#e3e5e7]">
                  <div className={`flex items-center gap-[5px] whitespace-nowrap ${r.pad}`}>
                    {r.fold && (
                      <button aria-label="fold" className="mr-0.5 shrink-0">
                        <svg width={9} height={9} viewBox="0 0 9 9">
                          <path d={r.fold === "open" ? "M0 1h9L4.500 8z" : "M1 0v9l7-4.500z"} fill="#808080" />
                        </svg>
                      </button>
                    )}
                    <Icon name={r.icon} />
                    {r.text}
                  </div>
                </td>
                <td className="pl-0.5">{r.value}</td>
              </tr>
            ))}
          </tbody>
        </table>
        <div className="w-[110px] flex-1 border-r border-[#e3e5e7]"></div>
        <div className="flex pb-px">
          <div className="flex w-[110px] pl-px">
            <ScrollBar thumb="w-[47px]" />
          </div>
          <ScrollBar thumb="w-6" />
        </div>
      </div>
      <div className="h-[5px]"></div>
    </aside>
  );
}

const loops = [
  { rx: 287, ry: 180 },
  { rx: 239, ry: 132 },
  { rx: 191, ry: 85 },
];

// each layer is narrower than the last and pushed towards the light
const layers = [
  { w: 19, d: 0, c: "#6a727f" },
  { w: 18, d: 0.7, c: "#6f7784" },
  { w: 17, d: 1.3, c: "#77808e" },
  { w: 15.5, d: 2, c: "#7f8998" },
  { w: 14, d: 2.8, c: "#8893a3" },
  { w: 12.5, d: 3.1, c: "#909cad" },
  { w: 10, d: 2.8, c: "#99a6b8" },
  { w: 7.5, d: 2.2, c: "#a2afc2" },
  { w: 5, d: 1.7, c: "#abb8cc" },
];

function Viewport() {
  return (
    <main className="relative flex-1 bg-gradient-to-b from-[#9b998b] to-[#e2e1d4]">
      <svg viewBox="241 175 1675 798" className="absolute inset-0 h-full w-full">
        <defs>
          <linearGradient id="shine" x1="0" y1=".2" x2="1" y2=".8">
            <stop offset="0" stopColor="#f6faff" />
            <stop offset=".12" stopColor="#edf4fd" />
            <stop offset=".2" stopColor="#cfdaea" />
            <stop offset=".32" stopColor="#b3bfd3" />
            <stop offset=".68" stopColor="#b3bfd3" />
            <stop offset=".8" stopColor="#cfdaea" />
            <stop offset=".88" stopColor="#edf4fd" />
            <stop offset="1" stopColor="#f6faff" />
          </linearGradient>
        </defs>
        {loops.map(({ rx, ry }) => (
          <g key={rx} fill="none">
            {layers.map(({ w, d, c }) => (
              <ellipse
                key={w}
                rx={rx}
                ry={ry}
                stroke={c}
                strokeWidth={w}
                transform={`translate(${895.5 - d * 0.5} ${592 - d * 0.9}) rotate(4.200)`}
              />
            ))}
            <ellipse rx={rx} ry={ry} stroke="url(#shine)" strokeWidth="2.500" transform="translate(894.500 590.500) rotate(4.200)" />
            <path
              d={`M${886 - rx} ${591 - rx * 0.074}q8 0 19 1.500M${886 + rx} ${591 + rx * 0.074}q8 0 19 1.500`}
              stroke="#2e3238"
              strokeWidth="1.200"
            />
          </g>
        ))}
        <path d="m872 590 23 1.500" stroke="#ff5a50" strokeWidth="1.300" />
        <path d="m895 592-2 24" stroke="#6cf04a" strokeWidth="1.300" />
        <circle cx="872" cy="590" r="2" fill="#ee2b25" />
        <circle cx="893.500" cy="615.500" r="2" fill="#22f01c" />
        <circle cx="895" cy="589" r="3" fill="#2ff1fb" />
      </svg>
      <div className="absolute inset-x-0 top-2 flex justify-center">
        <div className="flex h-[30px] items-center border border-[#b5b8bb] bg-[#f8f8f8] pl-0.5 pr-1">
          {viewTools.map((name) => (
            <button key={name} aria-label={name} className="relative flex h-6 w-[26px] items-center justify-center">
              <Icon name={name} />
              {withCorner.includes(name) && (
                <svg width={3} height={3} viewBox="0 0 3 3" className="absolute bottom-0 right-0.5">
                  <path d="M3 0v3H0z" fill="#555" />
                </svg>
              )}
            </button>
          ))}
          <button aria-label="spin center" className="ml-1.5 flex h-[23px] w-[23px] items-center justify-center border border-[#b0b3b6] bg-[#dfe1e3]">
            <Icon name="spin" />
          </button>
        </div>
      </div>
    </main>
  );
}

function StatusBar() {
  return (
    <footer className="relative flex h-[63px] border-t-2 border-[#8f928d] bg-[#eef0f3]">
      <div className="flex items-end gap-2 pb-1 pl-1.5">
        <button aria-label="navigator" className="flex h-[22px] w-[22px] items-center justify-center border border-[#b0b3b6] bg-[#dfe1e3] pl-1">
          <Icon name="tree" />
        </button>
        <button aria-label="browser" className="mb-[3px]">
          <Icon name="globe" />
        </button>
        <button aria-label="full screen" className="mb-[3px] ml-px">
          <Icon name="blank" />
        </button>
        <div className="ml-1 h-[22px] w-px bg-[#a9acaf]"></div>
      </div>
      <ul className="ml-0.5 pt-[7px] text-[11px] leading-4">
        <li className="flex items-center">
          <Icon name="warning" />
          警告:扫描_3完全在模型外部。
        </li>
        <li className="flex items-center">
          <span className="ml-1 mr-[5px] h-[5px] w-[5px] rounded-full bg-[#1b6685]"></span>
          PRT0001 重新生成成功完成。
        </li>
        <li className="flex items-center">
          <span className="ml-1 mr-[5px] h-[5px] w-[5px] rounded-full bg-[#1b6685]"></span>
          特征成功重新定义。
        </li>
      </ul>
      <div className="pointer-events-none absolute -top-0.5 right-0 h-[63px] w-[207px] bg-[#f8faf8]/50">
        <svg width={62} height={60} viewBox="0 0 62 60" className="absolute left-0 top-1" fill="none">
          <path
            fillRule="evenodd"
            fill="#a9bac8"
            d="M9 1C22-2 40 10 43 25c2 9-3 13-10 12C18 36 2 21 2 9c0-4 3-7 7-8zm3 3c-4 1-6 4-5 8 2 10 15 21 26 22 6 0 9-3 8-9C37 14 22 2 12 4z"
          />
          <path
            fillRule="evenodd"
            fill="#eba5a8"
            d="M50 16c8 0 11 8 7 18-4 11-13 20-20 20-5 0-7-4-7-7 2 3 4 5 8 4 6-2 11-9 14-18 2-8 1-13-4-14-6 0-12 5-16 12 2-8 10-15 18-15z"
          />
          <path d="M32 39c-8-10-22-8-22 1 0 4 5 8 10 8" stroke="#c8d0d6" strokeWidth="2" />
        </svg>
      </div>
      <div className="relative ml-auto flex items-end pb-1 pr-[19px]">
        <div className="mr-10 h-[27px] w-px bg-[#b0b3b6]"></div>
        <div className="mr-0.5 h-[27px] w-px bg-[#b0b3b6]"></div>
        <button aria-label="find" className="flex h-6 w-[42px] items-center border border-[#c3c6c9] bg-white">
          <span className="flex h-full w-[27px] items-center justify-center border-r border-[#c3c6c9]">
            <Icon name="find" />
          </span>
          <span className="flex flex-1 justify-center">
            <Caret />
          </span>
        </button>
        <div className="ml-0.5 mr-[97px] h-[27px] w-px bg-[#b0b3b6]"></div>
        <div className="relative">
          <select aria-label="filter" className="block h-6 w-44 appearance-none border border-[#c6c8ca] bg-white/40 pl-[7px] text-xs text-[#777]">
            <option>几何</option>
          </select>
          <span className="pointer-events-none absolute right-0 top-0 flex h-6 w-4 items-center justify-center border-l border-[#c6c8ca]">
            <Caret />
          </span>
        </div>
      </div>
      <div className="pointer-events-none absolute -top-0.5 right-0 h-[63px] w-[207px]">
        <span className="absolute left-[69px] top-0.5 font-['Noto_Sans_CJK_SC'] text-[30px] font-black leading-9 text-[#9bd5b4]">野火论坛</span>
        <span className="absolute bottom-1 left-[58px] text-[15px] leading-5 text-[#bfe2df]">www.proewildfire.cn</span>
      </div>
      <svg width={12} height={12} viewBox="0 0 12 12" className="absolute bottom-0.5 right-0.5">
        <path d="M0 12 12 0M5 12l7-7M10 12l2-2" stroke="#c0c3c6" />
      </svg>
    </footer>
  );
}

export default function App() {
  return (
    <div className="flex h-screen flex-col overflow-hidden border-4 border-[#a4a4a4] font-['Noto_Sans','Noto_Sans_CJK_SC',sans-serif] text-xs text-[#444]">
      <Header />
      <div className="flex h-[113px] shrink-0 overflow-hidden border-b-2 border-[#a6a8aa] bg-[#f8f8f8]">
        {groups.map((group) => (
          <RibbonGroup key={group.label} group={group} />
        ))}
        <div className="flex-1 self-end bg-[#ebedf0] pt-6"></div>
      </div>
      <div className="flex min-h-0 flex-1">
        <ModelTree />
        <Viewport />
      </div>
      <StatusBar />
    </div>
  );
}
